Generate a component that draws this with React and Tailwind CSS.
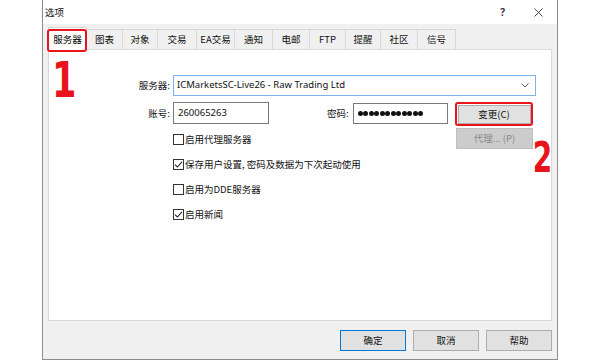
import React from "react";

const cjk = { fontFamily: '"Noto Sans CJK SC", "Noto Sans", sans-serif' };
const latin = { fontFamily: '"Noto Sans", "Noto Sans CJK SC", sans-serif' };
const bigNum = { fontFamily: '"DejaVu Sans Condensed", "DejaVu Sans", sans-serif' };

const tabs = [
  ["服务器", "w-[39px]"],
  ["图表", "w-[36px]"],
  ["对象", "w-[35px]"],
  ["交易", "w-[39px]"],
  ["EA交易", "w-[38px]"],
  ["通知", "w-[38px]"],
  ["电邮", "w-[37px]"],
  ["FTP", "w-[36px]"],
  ["提醒", "w-[35px]"],
  ["社区", "w-[37px]"],
  ["信号", "w-[38px]"],
];

function Check({ checked, label }) {
  return (
    <div className="flex h-[25px] items-center">
      <div className="flex h-[11px] w-[11px] items-center justify-center border border-[#333] bg-white">
        {checked && (
          <svg width="9" height="9" viewBox="0 0 9 9">
            <path d="M1 4.6 L3.4 7 L8 1.8" fill="none" stroke="#222" strokeWidth="1.1" />
          </svg>
        )}
      </div>
      <span className="ml-[1px] text-[9.5px] leading-none text-[#111]">{label}</span>
    </div>
  );
}

export default function App() {
  return (
    <div className="h-[360px] w-[600px] overflow-hidden bg-white" style={cjk}>
      <div className="ml-[42px] flex h-[360px] w-[516px] flex-col border-x border-b border-[#8c8c8c]">
        {/* title bar */}
        <div className="flex h-[24px] items-center bg-white pl-[2px] pr-[14px]">
          <span className="text-[9.5px] text-[#111]">选项</span>
          <span className="ml-auto text-[10px] font-bold text-[#333]" style={latin}>?</span>
          <svg className="ml-[29px]" width="9" height="9" viewBox="0 0 9 9">
            <path d="M0.5 0.5 L8.5 8.5 M8.5 0.5 L0.5 8.5" stroke="#333" strokeWidth="0.9" />
          </svg>
        </div>

        <div className="flex flex-1 flex-col bg-[#f0f0f0] pl-[5px] pr-[5px]">
          {/* tabs */}
          <div className="relative mt-[3px] flex h-[22px] items-end">
            {tabs.map(([t, w], i) =>
              i === 0 ? (
                <div
                  key={t}
                  className={`${w} relative z-10 -mb-px flex h-[23px] items-center justify-center whitespace-nowrap border-x border-t border-[#d9d9d9] bg-white text-[9.5px]`}
                >
                  {t}
                </div>
              ) : (
                <div
                  key={t}
                  className={`${w} flex h-[20px] items-center justify-center whitespace-nowrap border-r border-t border-[#d9d9d9] bg-[#f0f0f0] text-[9.5px] text-[#111]`}
                >
                  {t}
                </div>
              )
            )}
            <div className="absolute left-[-1px] top-[2px] z-20 h-[23px] w-[40px] rounded-[3px] border-[2.5px] border-[#e8141c]" />
          </div>

          {/* panel */}
          <div className="relative h-[272px] border border-[#dadada] bg-white">
            <div
              className="absolute left-[3px] top-[5px] origin-top-left scale-x-[0.78] text-[50px] font-bold leading-none text-[#e8141c]"
              style={bigNum}
            >
              1
            </div>

            <div className="flex items-center pt-[25px]">
              <div className="w-[121px] text-right text-[9.5px] text-[#111]">服务器:</div>
              <div className="ml-[3px] flex h-[21px] w-[363px] items-center border border-[#7db3e8] bg-white pl-[3px] pr-[6px]">
                <span className="text-[9.5px] text-[#111]" style={latin}>
                  ICMarketsSC-Live26 - Raw Trading Ltd
                </span>
                <svg className="ml-auto" width="8" height="5" viewBox="0 0 8 5">
                  <path d="M0.5 0.5 L4 4 L7.5 0.5" fill="none" stroke="#555" strokeWidth="1" />
                </svg>
              </div>
            </div>

            <div className="mt-[6px] flex">
              <div className="w-[406px]">
                <div className="flex items-center">
                  <div className="w-[121px] text-right text-[9.5px] text-[#111]">账号:</div>
                  <div className="ml-[3px] flex h-[22px] w-[96px] items-center border border-[#7a7a7a] bg-white pl-[4px]">
                    <span className="text-[9.5px] text-[#111]" style={latin}>260065263</span>
                  </div>
                  <div className="ml-[58px] text-[9.5px] text-[#111]">密码:</div>
                  <div className="ml-[4px] flex h-[21px] w-[95px] items-center gap-[0.5px] border border-[#7a7a7a] bg-white pl-[4px]">
                    {Array.from({ length: 12 }).map((_, i) => (
                      <div key={i} className="h-[5px] w-[5px] rounded-full bg-[#111]" />
                    ))}
                  </div>
                </div>
                <div className="ml-[124px] mt-[3px] flex flex-col">
                  <Check label="启用代理服务器" />
                  <Check checked label="保存用户设置, 密码及数据为下次起动使用" />
                  <Check label="启用为DDE服务器" />
                  <Check checked label="启用新闻" />
                </div>
              </div>
              <div className="flex flex-col">
                <div className="rounded-[3px] border-[2.5px] border-[#e8141c] p-[0.5px]">
                  <div className="flex h-[19px] w-[73px] items-center justify-center border border-[#adadad] bg-[#e1e1e1] text-[9.5px] text-[#111]">
                    变更(C)
                  </div>
                </div>
                <div className="ml-[1px] mt-[2px] flex h-[21px] w-[77px] items-center justify-center border border-[#bfbfbf] bg-[#cccccc] text-[9.5px] text-[#8a8a8a]">
                  代理... (P)
                </div>
              </div>
            </div>

            <div
              className="absolute right-[-1px] top-[87px] origin-top-right scale-x-[0.74] text-[42px] font-bold leading-none text-[#e8141c]"
              style={bigNum}
            >
              2
            </div>
          </div>

          {/* buttons */}
          <div className="mt-[9px] flex justify-end gap-[7px]">
            <div className="flex h-[21px] w-[66px] items-center justify-center border border-[#0078d7] bg-[#e1e1e1] text-[9.5px] text-[#111]">
              确定
            </div>
            <div className="flex h-[21px] w-[66px] items-center justify-center border border-[#adadad] bg-[#e1e1e1] text-[9.5px] text-[#111]">
              取消
            </div>
            <div className="flex h-[21px] w-[66px] items-center justify-center border border-[#adadad] bg-[#e1e1e1] text-[9.5px] text-[#111]">
              帮助
            </div>
          </div>
        </div>
      </div>
    </div>
  );
}
